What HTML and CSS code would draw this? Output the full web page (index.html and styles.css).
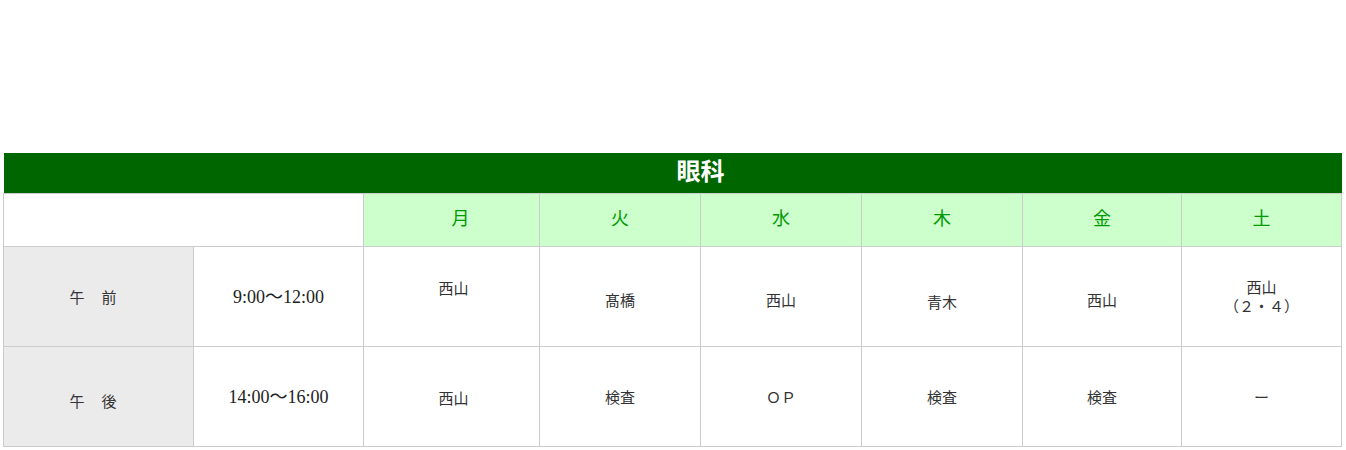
FILE: index.html
```html
<!DOCTYPE html>
<html lang="ja">
<head>
<meta charset="utf-8">
<title>眼科 診療表</title>
<link rel="stylesheet" href="styles.css">
</head>
<body>
<div class="page">
  <table class="schedule">
    <colgroup>
      <col class="c-label">
      <col class="c-time">
      <col class="c-mon">
      <col class="c-day">
      <col class="c-day">
      <col class="c-day">
      <col class="c-fri">
      <col class="c-sat">
    </colgroup>
    <thead>
      <tr class="r-title"><th colspan="8" class="title">眼科</th></tr>
      <tr class="r-days">
        <th colspan="2" class="blank"></th>
        <th class="day mon">月</th>
        <th class="day">火</th>
        <th class="day">水</th>
        <th class="day">木</th>
        <th class="day">金</th>
        <th class="day">土</th>
      </tr>
    </thead>
    <tbody>
      <tr class="r-slot">
        <th class="label">午　前</th>
        <td class="time">9:00～12:00</td>
        <td class="doc monc">西山<br>&nbsp;</td>
        <td class="doc dn">髙橋</td>
        <td class="doc dn">西山</td>
        <td class="doc dn2">青木</td>
        <td class="doc dn">西山</td>
        <td class="doc two">西山<br>（２・４）</td>
      </tr>
      <tr class="r-slot">
        <th class="label dn3">午　後</th>
        <td class="time">14:00～16:00</td>
        <td class="doc dn1 monc">西山</td>
        <td class="doc">検査</td>
        <td class="doc">ＯＰ</td>
        <td class="doc">検査</td>
        <td class="doc">検査</td>
        <td class="doc">ー</td>
      </tr>
    </tbody>
  </table>
</div>
</body>
</html>
```

FILE: styles.css
```css
html, body {
  margin: 0;
  padding: 0;
  background: #ffffff;
}

.page {
  padding: 153px 0 0 3px;
}

.schedule {
  border-collapse: collapse;
  table-layout: fixed;
  width: 1339px;
  font-family: "Noto Sans CJK JP", "Noto Sans", sans-serif;
  color: #333333;
}

.c-label { width: 190px; }
.c-time { width: 170px; }
.c-mon { width: 176px; }
.c-day { width: 161px; }
.c-fri { width: 159px; }
.c-sat { width: 160px; }

.schedule th,
.schedule td {
  border: 1px solid #cccccc;
  padding: 0;
  text-align: center;
  vertical-align: middle;
}

.r-title { height: 40px; }
.r-days { height: 53px; }
.r-slot { height: 100px; }

.schedule .title {
  background: #006600;
  border: 0;
  color: #ffffff;
  font-size: 24px;
  font-weight: bold;
  line-height: 34px;
  padding: 0 0 6px 56px;
}

.blank {
  background: #ffffff;
}

.day {
  background: #ccffcc;
  color: #009900;
  font-size: 18px;
  font-weight: normal;
  line-height: 24px;
}

.schedule .day {
  padding-bottom: 6px;
}

.schedule .mon {
  padding-left: 18px;
}

.label {
  background: #ebebeb;
  font-size: 15px;
  font-weight: normal;
  line-height: 18px;
  letter-spacing: 1px;
  color: #333333;
}

.schedule .label {
  padding-right: 10px;
}

.time {
  font-family: "Liberation Serif", "Noto Sans CJK JP", serif;
  font-size: 18px;
  line-height: 20px;
  color: #222222;
}

.doc {
  font-size: 15px;
  line-height: 18px;
}

.schedule .two { line-height: 19px; padding-bottom: 1px; }
.schedule .monc { padding-left: 4px; }
.schedule .dn { padding-top: 6px; }
.schedule .dn1 { padding-top: 3px; }
.schedule .dn2 { padding-top: 10px; }
.schedule .dn3 { padding-top: 8px; }
```
